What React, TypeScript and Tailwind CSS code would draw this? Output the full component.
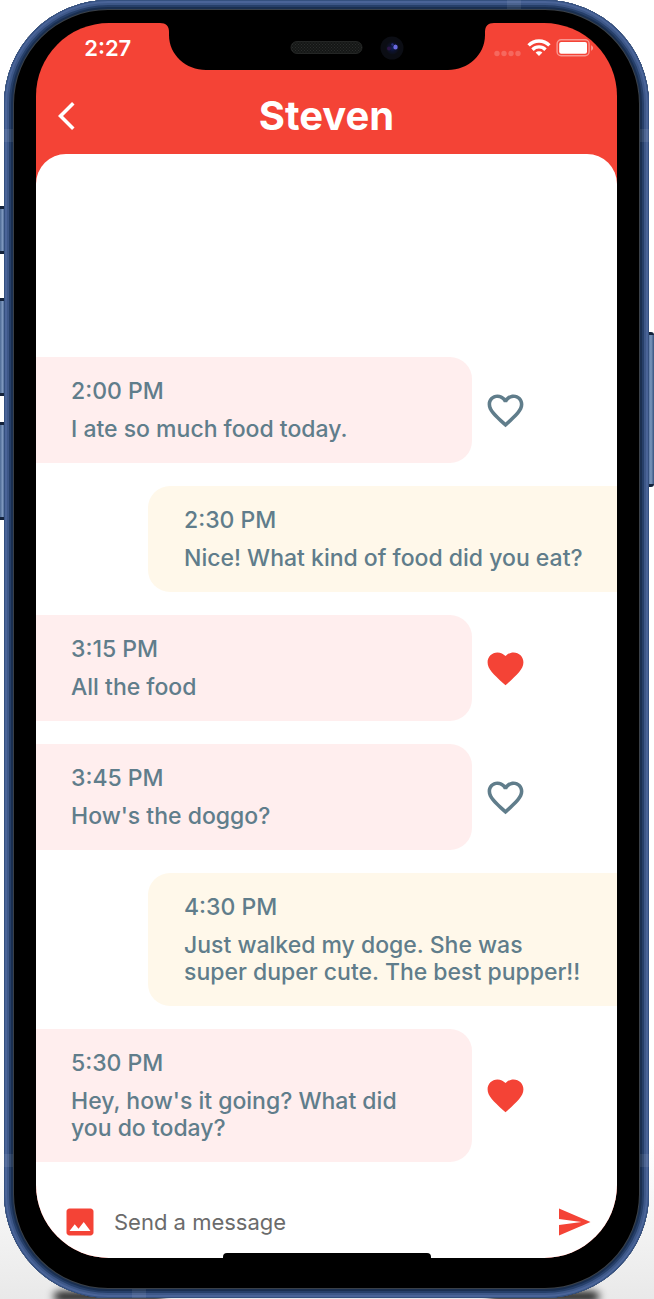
import React from "react";
import { MdFavorite, MdFavoriteBorder, MdPhoto, MdSend } from "react-icons/md";

type Message = {
  time: string;
  text: string;
  mine?: boolean;
  liked?: boolean;
};

const messages: Message[] = [
  { time: "2:00 PM", text: "I ate so much food today." },
  { time: "2:30 PM", text: "Nice! What kind of food did you eat?", mine: true },
  { time: "3:15 PM", text: "All the food", liked: true },
  { time: "3:45 PM", text: "How's the doggo?" },
  { time: "4:30 PM", text: "Just walked my doge. She was super duper cute. The best pupper!!", mine: true },
  { time: "5:30 PM", text: "Hey, how's it going? What did you do today?", liked: true },
];

function MessageRow({ message }: { message: Message }) {
  if (message.mine) {
    return (
      <li className="flex justify-end">
        <div className="flex w-[469px] flex-col gap-[11px] rounded-l-[22px] bg-[#fff8ea] pt-[21px] pr-8 pb-5 pl-9">
          <time>{message.time}</time>
          <p>{message.text}</p>
        </div>
      </li>
    );
  }
  return (
    <li className="flex items-center gap-3">
      <div className="flex w-3/4 flex-col gap-[11px] rounded-r-[22px] bg-[#ffeeee] px-[35px] pt-[21px] pb-5">
        <time>{message.time}</time>
        <p>{message.text}</p>
      </div>
      <button type="button" aria-label={message.liked ? "Unlike" : "Like"} aria-pressed={!!message.liked}>
        {message.liked ? (
          <MdFavorite className="size-[43px] text-[#f44336]" />
        ) : (
          <MdFavoriteBorder className="size-[43px] text-[#607d8b]" />
        )}
      </button>
    </li>
  );
}

function Notch() {
  return (
    <svg className="h-[47px] w-[334px] shrink-0" viewBox="0 0 334 47" aria-hidden="true">
      <defs>
        <pattern id="mesh" width="3" height="3" patternUnits="userSpaceOnUse">
          <rect width="3" height="3" fill="#151716" />
          <rect width="1" height="1" fill="#2b2d2c" />
          <rect x="1.500" y="1.500" width="1" height="1" fill="#2b2d2c" />
        </pattern>
        <radialGradient id="lens">
          <stop offset="0" stopColor="#14255c" />
          <stop offset="0.500" stopColor="#0c1230" />
          <stop offset="1" stopColor="#0c0f17" />
        </radialGradient>
      </defs>
      <path d="M0 0H334C328 0 325 3 325 9V12C325 32 308 47 288 47H46C26 47 9 32 9 12V9C9 3 6 0 0 0Z" fill="#000" />
      <rect x="131" y="18.500" width="71" height="12" rx="6" fill="url(#mesh)" stroke="#2a2c2b" strokeWidth="0.800" />
      <circle cx="232" cy="25" r="11.500" fill="#0b0d14" />
      <circle cx="232.500" cy="25" r="6.500" fill="url(#lens)" />
      <circle cx="229" cy="25.500" r="2" fill="#2c1547" />
      <ellipse cx="235.500" cy="24" rx="2.200" ry="2.600" fill="#6a6ae0" />
      <circle cx="232.500" cy="21.500" r="1.200" fill="#2a2f7c" />
    </svg>
  );
}

function StatusIcons() {
  return (
    <svg className="h-[20px] w-[100px]" viewBox="0 0 100 20" aria-hidden="true">
      <g fill="#fff" fillOpacity="0.200">
        <circle cx="3" cy="15.500" r="2.700" />
        <circle cx="10" cy="15.500" r="2.700" />
        <circle cx="17" cy="15.500" r="2.700" />
        <circle cx="24" cy="15.500" r="2.700" />
      </g>
      <g fill="none" stroke="#fff" strokeWidth="3.400">
        <path d="M34.600 7.400A14.500 14.500 0 0 1 55.400 7.400" />
        <path d="M38.500 11.700A9 9 0 0 1 51.500 11.700" />
      </g>
      <path d="M45 18L41.600 14.600A4.800 4.800 0 0 1 48.400 14.600Z" fill="#fff" />
      <rect x="63.100" y="1.800" width="32" height="16" rx="4" fill="none" stroke="#fff" strokeOpacity="0.450" strokeWidth="1.400" />
      <rect x="65.200" y="4" width="27.800" height="11.800" rx="2" fill="#fff" />
      <path d="M97.200 7.200V12.700C99.600 11.700 99.600 8.200 97.200 7.200Z" fill="#fff" fillOpacity="0.500" />
    </svg>
  );
}

function FrameDetails() {
  const key =
    "absolute bg-linear-to-r from-[#4c6a94] via-[#7d97bd] to-[#38537f] border-y-[3px] border-[#14233c]";
  const band = "absolute z-10 bg-white/8";
  return (
    <div aria-hidden="true">
      <div className={`${key} top-[206px] -left-1 h-[48px] w-[5px]`} />
      <div className={`${key} top-[298px] -left-1 h-[98px] w-[5px]`} />
      <div className={`${key} top-[422px] -left-1 h-[98px] w-[5px]`} />
      <div className={`${key} top-[332px] -right-[5px] h-[155px] w-[6px] rounded-r-[3px]`} />
      <div className={`${band} top-[129px] left-0 h-[13px] w-[9px]`} />
      <div className={`${band} top-[129px] right-0 h-[13px] w-[9px]`} />
      <div className={`${band} bottom-[131px] left-0 h-[13px] w-[9px]`} />
      <div className={`${band} right-0 bottom-[131px] h-[13px] w-[9px]`} />
      <div className={`${band} top-0 right-[128px] h-[9px] w-[14px]`} />
      <div className={`${band} bottom-0 left-[128px] h-[9px] w-[14px]`} />
      <div className="absolute -bottom-[3px] left-[50px] h-[9px] w-[110px] rounded-full bg-black blur-[4px]" />
      <div className="absolute right-[50px] -bottom-[3px] h-[9px] w-[110px] rounded-full bg-black blur-[4px]" />
    </div>
  );
}

export default function App() {
  return (
    <div className="flex min-h-screen overflow-hidden bg-linear-to-b from-white from-88% to-[#e9e9e9] pr-[5px] pb-px pl-1 font-[Inter,'Liberation_Sans',sans-serif]">
      <div className="relative flex flex-1 flex-col">
        <FrameDetails />
        <div className="relative flex flex-1 flex-col rounded-[104px] bg-black px-8 pt-[23px] pb-10 shadow-[inset_0_0_0_1px_#34507f,inset_0_0_0_3px_#4a6498,inset_0_0_0_5px_#3d5787,inset_0_0_0_7px_#263f69,inset_0_0_0_9px_#1a2f50,inset_0_0_0_10px_#3a4048]">
          <main className="flex flex-1 flex-col overflow-hidden rounded-[73px] bg-[#f44336]">
            <div className="flex justify-center">
              <div className="flex-1 pt-[10px] text-center text-[22px] leading-[30px] font-semibold text-white">
                <time className="pl-5">2:27</time>
              </div>
              <Notch />
              <div className="flex flex-1 pt-[15px]">
                <StatusIcons />
              </div>
            </div>
            <header className="grid h-[84px] grid-cols-[80px_1fr_80px] items-center pt-[7px]">
              <a href="#chats" aria-label="Back" className="pl-[22px] text-white">
                <svg className="size-[34px]" viewBox="0 0 24 24" fill="currentColor" aria-hidden="true">
                  <path d="M11.670 3.870L9.900 2.100 0 12l9.900 9.900 1.770-1.770L3.540 12z" />
                </svg>
              </a>
              <h1 className="text-center text-[40px] leading-[48px] font-bold text-white">Steven</h1>
            </header>
            <section className="flex flex-1 flex-col justify-end rounded-t-[30px] bg-white">
              <ul className="flex flex-col gap-[23px] text-[23px] leading-[27px] font-medium text-[#607d8b]">
                {messages.map((message) => (
                  <MessageRow key={message.time} message={message} />
                ))}
              </ul>
              <form
                className="mt-9 flex h-12 items-center gap-4 pr-[25px] pl-[26px]"
                onSubmit={(event) => event.preventDefault()}
              >
                <button type="button" aria-label="Attach a photo">
                  <MdPhoto className="size-9 text-[#f44336]" />
                </button>
                <input
                  type="text"
                  aria-label="Send a message"
                  placeholder="Send a message"
                  className="min-w-0 flex-1 text-[22px] leading-[27px] text-[#607d8b] outline-none placeholder:text-[#6b6b6b]"
                />
                <button type="submit" aria-label="Send">
                  <MdSend className="size-9 text-[#f44336]" />
                </button>
              </form>
              <div className="mt-[7px] h-[5px] w-[208px] self-center rounded-t-[4px] bg-black" aria-hidden="true" />
            </section>
          </main>
        </div>
      </div>
    </div>
  );
}
